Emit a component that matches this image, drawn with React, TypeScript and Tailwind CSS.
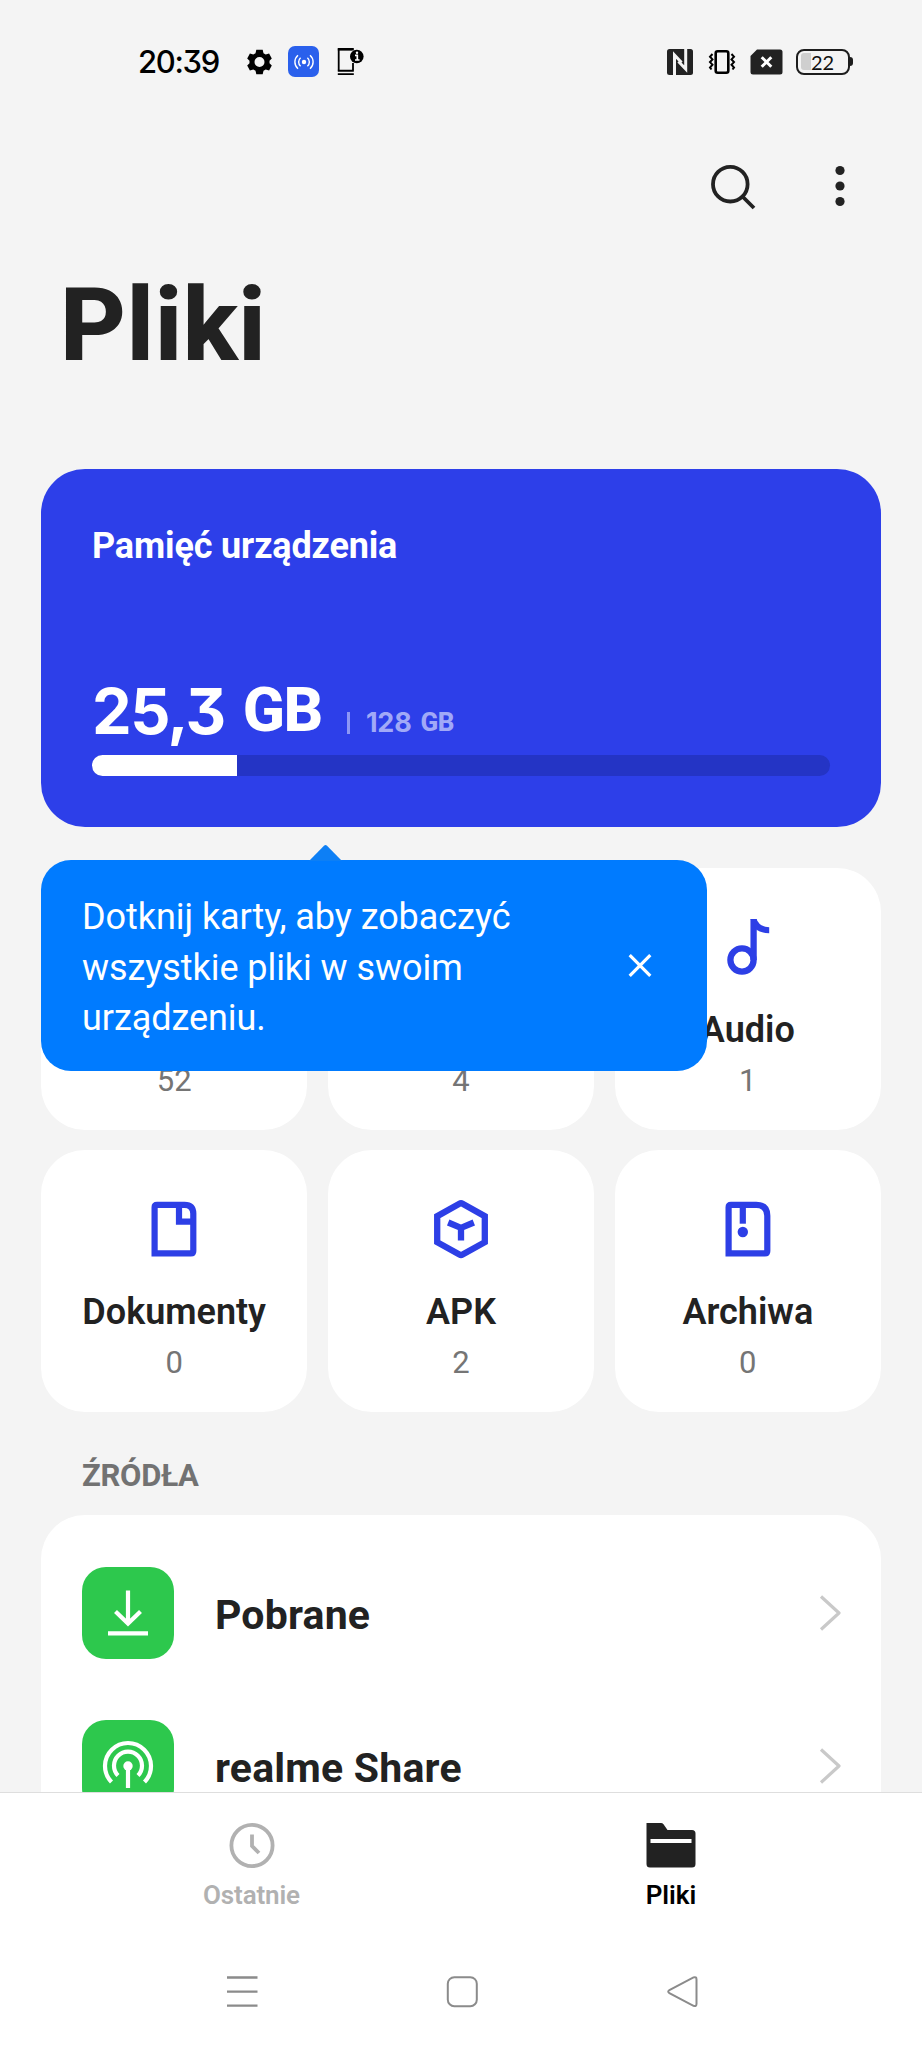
import type { ReactNode } from "react";

const DocIcon = () => (
  <svg width="60" height="60" viewBox="0 0 60 60" fill="none" stroke="#2d3fe6" strokeWidth="6.2">
    <path d="M10.6 54.4V8.2q0-2.4 2.4-2.4H40.5q8.8 0 8.8 8.8V52q0 2.4-2.4 2.4H10.6z" />
    <path d="M35 5.7V22.7H49" />
  </svg>
);

const ArchiveIcon = () => (
  <svg width="60" height="60" viewBox="0 0 60 60" fill="none" stroke="#2d3fe6" strokeWidth="6.2">
    <path d="M10.6 54.4V8.2q0-2.4 2.4-2.4H38.3q11 0 11 11V52q0 2.4-2.4 2.4H10.6z" />
    <path d="M24.8 5.7V24.7" />
    <circle cx="24.8" cy="33" r="5.2" fill="#2d3fe6" stroke="none" />
  </svg>
);

const ApkIcon = () => (
  <svg width="60" height="60" viewBox="0 0 60 60" fill="none" stroke="#2d3fe6" strokeWidth="6.3">
    <path d="M28.4 4.7q1.6-.9 3.2 0L53.8 17.2V43.2L31.6 55.5q-1.6.9-3.2 0L6.2 43.2V17.2z" />
    <path d="M17.2 23.5L30 28.8L42.8 23.5M30 28V41.5" />
  </svg>
);

const AudioIcon = () => (
  <svg width="60" height="60" viewBox="0 0 60 60" fill="none" stroke="#2d3fe6" strokeWidth="6.3">
    <circle cx="24" cy="43" r="11.6" />
    <path d="M35.6 43V2" />
    <path d="M32.5 2h6q2.8 7.7 12.7 8.2v6Q43.5 16 38 12.5z" fill="#2d3fe6" stroke="none" />
  </svg>
);

// the first two cards sit under the tooltip, only their counts stay visible
const categories = [
  { id: 1, name: "", count: 52, icon: null },
  { id: 2, name: "", count: 4, icon: null },
  { id: 3, name: "Audio", count: 1, icon: <AudioIcon /> },
  { id: 4, name: "Dokumenty", count: 0, icon: <DocIcon /> },
  { id: 5, name: "APK", count: 2, icon: <ApkIcon /> },
  { id: 6, name: "Archiwa", count: 0, icon: <ArchiveIcon /> },
];

const StatusBar = () => (
  <div className="flex h-[123px] shrink-0 items-center justify-between pl-[138px] pr-[68px]">
    <div className="flex items-center">
      <span className="w-[109px] pt-px font-['Inter',sans-serif] text-[31px] font-[450] tracking-[-1.3px] text-black [font-feature-settings:'cv09']">
        20:39
      </span>
      <svg width="25" height="26" viewBox="0 0 25 26">
        <path
          fill="#000"
          fillRule="evenodd"
          d="M9.3.8h6.4l.8 3.5 2.2 1.3 3.4-1.1 2.7 4.9-2.3 2.3v2.6l2.3 2.3-2.7 4.9-3.4-1.1-2.2 1.3-.8 3.5H9.3l-.8-3.5-2.2-1.3-3.4 1.1-2.7-4.9 2.3-2.3v-2.6L.2 9.4l2.7-4.9 3.4 1.1L8.5 4.3zM12.5 8a5 5 0 1 0 0 10a5 5 0 1 0 0-10z"
        />
      </svg>
      <div className="ml-4 flex size-[31px] items-center justify-center rounded-[7px] bg-[#2a60ec]">
        <svg width="20" height="18" viewBox="0 0 20 18" fill="none" stroke="#fff" strokeWidth="1.4">
          <circle cx="10" cy="9" r="2.2" fill="#fff" stroke="none" />
          <path d="M6.6 4.8a5.5 5.5 0 0 0 0 8.4M13.4 4.8a5.5 5.5 0 0 1 0 8.4M4 2.2a9 9 0 0 0 0 13.6M16 2.2a9 9 0 0 1 0 13.6" />
        </svg>
      </div>
      <svg className="ml-[18px]" width="27" height="29" viewBox="0 0 27 29">
        <path d="M1.7 23.5V2.3H15M16 16V23.5" fill="none" stroke="#000" strokeWidth="1.8" />
        <path d="M.8 1H16.8V3.4H.8zM.8 22.7H16.8V24.7H.8zM.8 26.3H16.8V28H.8z" fill="#000" />
        <circle cx="19.8" cy="9.5" r="6.8" fill="#000" />
        <path d="M18 8.4h2.3v4.4M18 13h4.5" fill="none" stroke="#fff" strokeWidth="1.7" />
        <circle cx="20" cy="5.7" r="1.2" fill="#fff" />
      </svg>
    </div>
    <div className="flex items-center">
      <svg width="26" height="26" viewBox="0 0 26 26">
        <rect width="26" height="26" rx="2.5" fill="#222" />
        <path d="M7.5 26V6L14.5 13.5" fill="none" stroke="#f4f4f4" strokeWidth="3" />
        <path d="M11.5 12.5L18.7 20V0" fill="none" stroke="#f4f4f4" strokeWidth="3" />
      </svg>
      <svg className="ml-[15px]" width="28" height="26" viewBox="0 0 28 26" fill="none" stroke="#000">
        <rect x="7.7" y="2.2" width="12.6" height="21.6" rx="2" strokeWidth="2.6" />
        <path
          d="M4.5 5l-2.5 2.7 2.5 2.7-2.5 2.7 2.5 2.7-2.5 2.7 1.5 2M23.5 5l2.5 2.7-2.5 2.7 2.5 2.7-2.5 2.7 2.5 2.7-1.5 2"
          strokeWidth="2"
        />
      </svg>
      <svg className="ml-[14px]" width="33" height="26" viewBox="0 0 33 26">
        <path d="M7 .5H30q2.5 0 2.5 2.5V23q0 2.5-2.5 2.5H3Q.5 25.5.5 23V7z" fill="#222" />
        <path d="M11.7 8.2l9.6 9.6M21.3 8.2l-9.6 9.6" stroke="#fff" strokeWidth="3" />
      </svg>
      <div className="ml-[13px] flex h-[26px] w-[54px] items-center rounded-[8px] border-2 border-[#1d1d1d] pl-[3px]">
        <div className="h-[17px] w-[10px] rounded-l-[3px] bg-[#cfcfcf]" />
        <span className="font-['Lato',sans-serif] text-[20px] leading-none text-[#111]">22</span>
      </div>
      <div className="mr-px h-[9px] w-[3px] rounded-r-sm bg-[#1d1d1d]" />
    </div>
  </div>
);

const Toolbar = () => (
  <div className="flex h-[125px] shrink-0 items-center justify-end pr-[77px]">
    <svg width="48" height="48" viewBox="0 0 48 48" fill="none" stroke="#222" strokeWidth="3.8">
      <circle cx="21.3" cy="22.2" r="17.3" />
      <path d="M33.5 34.5L45 46" />
    </svg>
    <svg className="ml-[78px]" width="10" height="44" viewBox="0 0 10 44" fill="#222">
      <circle cx="5" cy="6.5" r="4.6" />
      <circle cx="5" cy="22" r="4.6" />
      <circle cx="5" cy="37.5" r="4.6" />
    </svg>
  </div>
);

const StorageCard = () => (
  <div className="mx-[41px] flex h-[358px] shrink-0 flex-col rounded-[44px] bg-[#2d3fe9] px-[51px] text-white">
    <h2 className="mt-[56px] text-[36px] font-bold leading-[42px] tracking-[-0.15px]">Pamięć urządzenia</h2>
    <div className="mt-[99px] flex h-[89px] items-baseline font-bold">
      <span className="font-['Inter',sans-serif] text-[63px] leading-[90px] tracking-[-1.5px] [font-feature-settings:'cv09']">
        25,3
      </span>
      <span className="relative -top-[3px] ml-[18px] text-[62px] font-extrabold leading-[90px] tracking-[-1.5px]">GB</span>
      <span className="mb-[21px] ml-[25px] h-[22px] w-[3px] self-end bg-[#8d97f5]" />
      <span className="relative -top-[2px] ml-[16px] font-['Inter',sans-serif] text-[27px] tracking-[-0.2px] text-[#a1a9f7]">
        128
      </span>
      <span className="relative -top-[3px] ml-[9px] text-[26px] font-extrabold tracking-[-0.5px] text-[#a1a9f7]">GB</span>
    </div>
    <div className="h-[21px] w-[738px] overflow-hidden rounded-full bg-[#2434c5]">
      <div className="h-full w-[145px] bg-white" />
    </div>
  </div>
);

const Tooltip = () => (
  <div className="absolute left-[41px] top-[860px] flex h-[211px] w-[666px] items-center justify-between rounded-[30px] bg-[#007bff] pl-[41px] pr-[55px]">
    <svg className="absolute -top-[16px] left-[268px]" width="33" height="17" viewBox="0 0 33 17">
      <path d="M0 17L15 1.7q1.5-1.4 3 0L33 17z" fill="#0d7ff5" />
    </svg>
    <p className="w-[460px] pt-[5px] text-[36px] leading-[50.5px] tracking-[-0.06px] text-white">
      Dotknij karty, aby zobaczyć wszystkie pliki w swoim urządzeniu.
    </p>
    <svg width="24" height="24" viewBox="0 0 24 24" stroke="#fff" strokeWidth="3.2">
      <path d="M1.7 1.2L22.3 21.8M22.3 1.2L1.7 21.8" />
    </svg>
  </div>
);

const SourceRow = ({ name, children }: { name: string; children: ReactNode }) => (
  <div className="flex h-[153.5px] items-center pl-[41px] pr-[40px]">
    <div className="flex size-[92px] items-center justify-center rounded-[24px] bg-[#2dc84d]">{children}</div>
    <span className="ml-[41px] grow pt-[4px] text-[41px] font-[670] leading-[48px] tracking-[0.2px] text-[#222]">{name}</span>
    <svg width="22" height="36" viewBox="0 0 22 36" fill="none" stroke="#c9c9c9" strokeWidth="3.2" strokeLinejoin="round">
      <path d="M2 1.5L20 18L2 34.5" />
    </svg>
  </div>
);

const App = () => {
  return (
    <div className="relative flex h-[2048px] w-[922px] flex-col overflow-hidden bg-[#f4f4f4] font-['Roboto',sans-serif]">
      <div className="flex h-[1792px] shrink-0 flex-col overflow-hidden">
        <StatusBar />
        <Toolbar />
        <h1 className="ml-[60px] mt-[15px] h-[206px] shrink-0 text-[102px] font-extrabold leading-[125px] tracking-[0.5px] text-[#222]">
          Pliki
        </h1>
        <StorageCard />
        <div className="mx-[41px] mt-[41px] grid shrink-0 grid-cols-3 gap-x-[20.5px] gap-y-[20px]">
          {categories.map((c) => (
            <div key={c.id} className="flex h-[262px] flex-col items-center rounded-[44px] bg-white pt-[49px]">
              <div className="size-[60px]">{c.icon}</div>
              <span className="mt-[32px] h-[42px] text-[36px] font-[650] leading-[43px] text-[#222]">{c.name}</span>
              <span className="mt-[12px] text-[31px] leading-[36px] text-[#757575]">{c.count}</span>
            </div>
          ))}
        </div>
        <h3 className="ml-[82px] mt-[46px] shrink-0 text-[31px] font-bold leading-[36px] tracking-[-0.3px] text-[#727272]">
          ŹRÓDŁA
        </h3>
        <div className="mx-[41px] mt-[21px] shrink-0 rounded-t-[44px] bg-white pt-[21px]">
          <SourceRow name="Pobrane">
            <svg width="46" height="50" viewBox="0 0 46 50" fill="none" stroke="#fff" strokeWidth="4.2">
              <path d="M23 2.5V36M10.5 23.5L23 35.5L35.5 23.5M3 45.3H43" />
            </svg>
          </SourceRow>
          <SourceRow name="realme Share">
            <svg width="52" height="52" viewBox="0 0 52 52" fill="none" stroke="#fff" strokeWidth="4.2">
              <path d="M9.5 42A23 23 0 1 1 42.5 42" />
              <path d="M16 35.5A14 14 0 1 1 36 35.5M26 26V48" />
              <circle cx="26" cy="26" r="4.7" fill="#fff" stroke="none" />
            </svg>
          </SourceRow>
        </div>
      </div>
      <Tooltip />
      <div className="flex h-[170px] shrink-0 border-t border-[#dedede] bg-white px-[42px] pt-[29px]">
        <div className="flex w-1/2 flex-col items-center">
          <svg width="46" height="46" viewBox="0 0 46 46" fill="none" stroke="#b1b1b1" strokeWidth="3.8">
            <circle cx="23" cy="23.5" r="20.6" />
            <path d="M23 12.5V24L30 31" />
          </svg>
          <span className="mt-[12px] text-[26px] font-semibold leading-[30px] tracking-[-0.15px] text-[#b1b1b1]">Ostatnie</span>
        </div>
        <div className="flex w-1/2 flex-col items-center">
          <svg width="50" height="46" viewBox="0 0 50 46">
            <path d="M.5 1H15q1.5 0 2.5 1.3L21.5 8H46q3.5 0 3.5 3.5V42q0 3.5-3.5 3.5H4Q.5 45.5.5 42z" fill="#222" />
            <path d="M4.5 19H45.5" stroke="#fff" strokeWidth="4.2" />
          </svg>
          <span className="mt-[12px] pl-px text-[26px] font-semibold leading-[30px] text-black">Pliki</span>
        </div>
      </div>
      <div className="flex h-[86px] shrink-0 items-start justify-between bg-white pl-[226px] pr-[224px] pt-[13px]">
        <svg width="32" height="34" viewBox="0 0 32 34" stroke="#8b8b8b" strokeWidth="2.3">
          <path d="M1 2.5H31.5M1 16.6H31.5M1 30.6H31.5" />
        </svg>
        <svg width="32" height="34" viewBox="0 0 32 34" fill="none" stroke="#8b8b8b" strokeWidth="2">
          <rect x="1.8" y="2.2" width="29" height="29" rx="6.5" />
        </svg>
        <svg width="32" height="34" viewBox="0 0 32 34" fill="none" stroke="#8b8b8b" strokeWidth="2">
          <path d="M27.5 2.4q3-1 3 2V28.8q0 3-3 2L3.4 18.2q-2.4-1.6 0-3.2z" />
        </svg>
      </div>
    </div>
  );
};

export default App;
